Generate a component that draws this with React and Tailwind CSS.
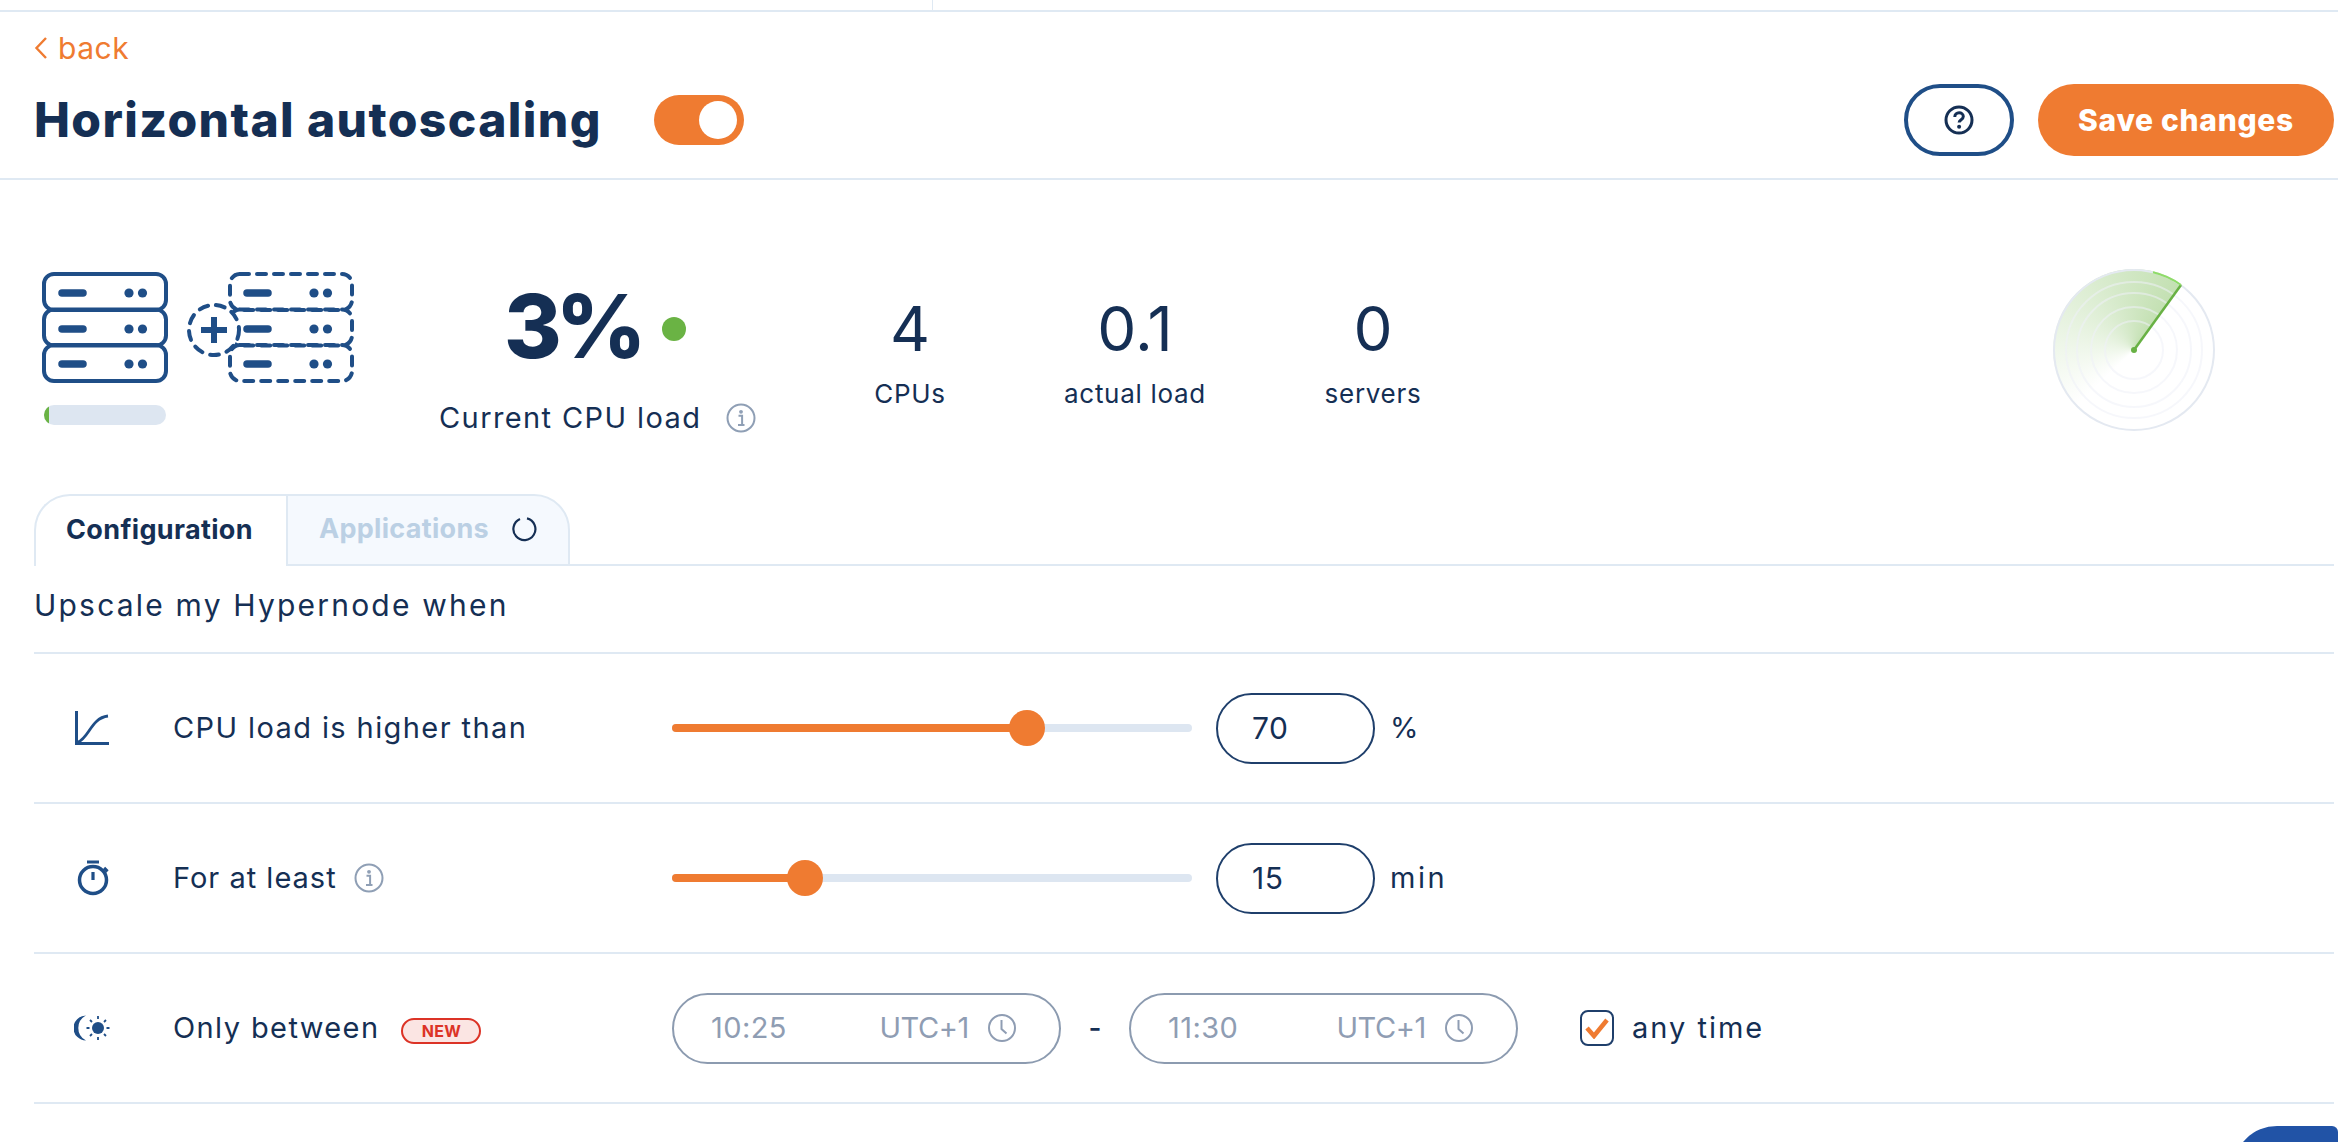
import React from 'react';

const line = 'border-[#dfe9f3]';

const InfoIcon = () => (
    <svg width="30" height="30" viewBox="0 0 30 30" fill="none" className="shrink-0">
        <circle cx="15" cy="15" r="13.5" stroke="#8f9fb5" strokeWidth="2" />
        <circle cx="15" cy="8.8" r="1.9" fill="#8f9fb5" />
        <path d="M12.5 12.8h3.6v9M12 22h6.5" stroke="#8f9fb5" strokeWidth="2" />
    </svg>
);

const ClockIcon = () => (
    <svg width="30" height="30" viewBox="0 0 30 30" fill="none" className="shrink-0">
        <circle cx="15" cy="15" r="13" stroke="#8f9db3" strokeWidth="2" />
        <path d="M14.5 7v9l5 4.5" stroke="#8f9db3" strokeWidth="2" />
    </svg>
);

const ServerRows = ({ x, dashed, barX, dotX }) => (
    <g>
        {[2, 37.5, 73].map((y, i) => (
            <rect key={i} x={x} y={y} width="122" height="36" rx="10" stroke="#1f4e87" strokeWidth="4" strokeDasharray={dashed ? '9 8' : undefined} strokeLinecap="round" />
        ))}
        {[21, 57, 92].map((y, i) => (
            <g key={i}>
                <path d={`M${barX} ${y}h21`} stroke="#1f4e87" strokeWidth="7.5" strokeLinecap="round" />
                <circle cx={dotX} cy={y} r="4.6" fill="#1f4e87" />
                <circle cx={dotX + 13.5} cy={y} r="4.6" fill="#1f4e87" />
            </g>
        ))}
    </g>
);

const ServersIcon = () => (
    <svg width="312" height="111" viewBox="0 0 312 111" fill="none" className="block">
        <ServerRows x={2} barX={20} dotX={87} />
        <ServerRows x={188} dashed barX={205} dotX={272} />
        <circle cx="172" cy="58" r="25" fill="white" stroke="#1f4e87" strokeWidth="4" strokeDasharray="9 8" strokeLinecap="round" />
        <path d="M159 58h26M172 45v26" stroke="#1f4e87" strokeWidth="6" />
    </svg>
);

const Radar = () => (
    <div className="relative size-[162px] rounded-full bg-[conic-gradient(from_216deg,#ffffff_0deg,#ffffff_10deg,#c3e0b2_180deg,#ffffff_180deg)]">
        <svg width="162" height="162" viewBox="0 0 162 162" fill="none" className="absolute inset-0">
            {[29, 43, 57, 68].map(r => (
                <circle key={r} cx="81" cy="81" r={r} stroke="#eef1f7" strokeOpacity="0.55" strokeWidth="2" />
            ))}
            <circle cx="81" cy="81" r="80" stroke="#e4e9f1" strokeWidth="2" />
            <path d="M81 81L128 16" stroke="#68b144" strokeWidth="2.5" />
            <path d="M128 16A80 80 0 0 0 100 3.3" stroke="#8fdc68" strokeWidth="2" />
            <circle cx="81" cy="81" r="3" fill="#68b144" />
        </svg>
    </div>
);

const Stat = ({ value, label, className }) => (
    <div className={`flex flex-col items-center pt-[21px] ${className}`}>
        <span className="text-[62px] leading-[72px]">{value}</span>
        <span className="mt-[13px] text-[26px] leading-[32px] tracking-[0.7px]">{label}</span>
    </div>
);

const Slider = ({ fill }) => (
    <div className="w-[520px] h-2 rounded-full bg-[#dde6f1] flex items-center">
        <div className={`h-2 rounded-l-full bg-[#ef7b31] ${fill}`} />
        <div className="size-9 -ml-[18px] shrink-0 rounded-full bg-[#ef7b31]" />
    </div>
);

const NumberBox = ({ value, unit }) => (
    <div className="ml-[24px] flex items-center">
        <div className="w-[159px] h-[71px] rounded-[36px] border-2 border-[#1f3f6b] pl-[34px] flex items-center text-[30px] tracking-[0.5px]">{value}</div>
        <span className="ml-[15px] text-[29px] tracking-[2.5px]">{unit}</span>
    </div>
);

const TimeBox = ({ time }) => (
    <div className="w-[389px] h-[71px] rounded-[36px] border-2 border-[#8c9bb0] flex items-center pl-[37px] pr-[42px] text-[29px] text-[#8f9db3]">
        <span className="tracking-[0.4px]">{time}</span>
        <span className="ml-auto mr-[18px] tracking-[-0.4px]">UTC+1</span>
        <ClockIcon />
    </div>
);

const Row = ({ icon, label, children }) => (
    <div className={`h-[150px] border-b-2 ${line} flex items-center`}>
        <div className="w-[139px] pl-[41px] flex items-center">{icon}</div>
        <div className="w-[499px] flex items-center text-[29px] tracking-[1.4px]">{label}</div>
        {children}
    </div>
);

const App = () => {
    return (
        <div className="relative w-[2338px] h-[1142px] overflow-hidden bg-white text-[#152f54] font-['Inter','Liberation_Sans',sans-serif]">
            <div className={`h-[12px] border-b-2 ${line} flex`}>
                <div className={`w-[933px] border-r ${line}`} />
            </div>

            <div className={`h-[168px] border-b-2 ${line} pl-[34px] pr-[4px] flex flex-col`}>
                <a className="mt-[18px] flex items-center text-[#ef7b31] text-[30px] leading-[36px] tracking-[0.5px]">
                    <svg width="14" height="24" viewBox="0 0 14 24" fill="none" className="mr-[10px]">
                        <path d="M12 2L2.5 12L12 22" stroke="#ef7b31" strokeWidth="2.4" />
                    </svg>
                    back
                </a>
                <div className="mt-[18px] flex items-center">
                    <h1 className="text-[48px] leading-[72px] font-extrabold tracking-[1.4px]">Horizontal autoscaling</h1>
                    <div className="ml-[52px] w-[90px] h-[50px] rounded-full bg-[#ef7b31] flex items-center justify-end pr-[7px]">
                        <div className="size-[38px] rounded-full bg-white" />
                    </div>
                    <button className="ml-auto w-[110px] h-[72px] rounded-full border-4 border-[#1f4e87] flex items-center justify-center">
                        <svg width="30" height="30" viewBox="0 0 30 30" fill="none">
                            <circle cx="15" cy="15" r="13" stroke="#152f54" strokeWidth="3" />
                            <path d="M10.8 12c0-2.6 2-4.2 4.3-4.2s4.2 1.5 4.2 3.8c0 3.2-4.2 3-4.2 6" stroke="#152f54" strokeWidth="3" />
                            <circle cx="15.1" cy="21.8" r="2" fill="#152f54" />
                        </svg>
                    </button>
                    <button className="ml-[24px] w-[296px] h-[72px] rounded-full bg-[#ef7b31] text-white text-[30px] font-extrabold tracking-[0.7px]">Save changes</button>
                </div>
            </div>

            <div className="h-[314px] pl-[42px] pr-[123px] pt-[92px] flex items-start">
                <div className="w-[312px]">
                    <ServersIcon />
                    <div className="mt-[22px] ml-[2px] w-[122px] h-5 rounded-full bg-[#dde6f1] overflow-hidden">
                        <div className="w-[5px] h-5 bg-[#6ab344]" />
                    </div>
                </div>

                <div className="ml-[85px] w-[316px] flex flex-col">
                    <div className="ml-[65px] flex items-center h-[108px]">
                        <span className="text-[88px] leading-[108px] font-extrabold tracking-[-6px]">3%</span>
                        <span className="ml-[22px] mt-[5px] size-6 rounded-full bg-[#6ab344]" />
                    </div>
                    <div className="mt-[20px] flex items-center whitespace-nowrap text-[29px] leading-[36px] tracking-[1.4px]">
                        Current CPU load
                        <span className="ml-[25px]"><InfoIcon /></span>
                    </div>
                </div>

                <Stat value="4" label="CPUs" className="ml-[55px] w-[200px]" />
                <Stat value="0.1" label="actual load" className="w-[250px]" />
                <Stat value="0" label="servers" className="w-[226px]" />

                <div className="ml-auto -mt-[3px]"><Radar /></div>
            </div>

            <div className="pl-[34px] pr-[4px]">
                <div className="flex items-end h-[72px]">
                    <div className={`w-[252px] h-[72px] rounded-tl-[36px] border-l-2 border-t-2 ${line} flex items-center pl-[30px] pb-[2px] text-[27px] font-bold tracking-[0.35px]`}>Configuration</div>
                    <div className={`w-[284px] h-[72px] rounded-tr-[36px] border-2 ${line} bg-[#f5f9fe] flex items-center pl-[31px] pb-[2px] text-[27px] font-bold tracking-[0.3px] text-[#bbd0e4]`}>
                        Applications
                        <svg width="26" height="26" viewBox="0 0 26 26" fill="none" className="ml-[22px]">
                            <path d="M9 3A11 11 0 1 0 16 2.4" stroke="#152f54" strokeWidth="2.2" />
                        </svg>
                    </div>
                    <div className={`flex-1 border-b-2 ${line}`} />
                </div>
                <div className={`h-[88px] border-b-2 ${line} flex pt-[19px] text-[30px] leading-[40px] tracking-[2.2px]`}>Upscale my Hypernode when</div>

                <Row
                    label="CPU load is higher than"
                    icon={
                        <svg width="34" height="34" viewBox="0 0 34 34" fill="none">
                            <path d="M1.5 0v32.5H34" stroke="#1f4e87" strokeWidth="3" />
                            <path d="M3 31C14 27 16 7 33 5" stroke="#1f4e87" strokeWidth="2.8" />
                        </svg>
                    }
                >
                    <Slider fill="w-[355px]" />
                    <NumberBox value="70" unit="%" />
                </Row>

                <Row
                    label={<span className="flex items-center tracking-[1px]">For at least<span className="ml-[17px]"><InfoIcon /></span></span>}
                    icon={
                        <svg width="34" height="36" viewBox="0 0 34 36" fill="none" className="ml-[2px]">
                            <circle cx="16" cy="20" r="13.5" stroke="#1f4e87" strokeWidth="3.5" />
                            <path d="M10 2h12M16 12v8M27 8l3.5 3.5" stroke="#1f4e87" strokeWidth="3.2" />
                        </svg>
                    }
                >
                    <Slider fill="w-[133px]" />
                    <NumberBox value="15" unit="min" />
                </Row>

                <Row
                    label={
                        <>
                            Only between
                            <span className="ml-[22px] mt-[6px] w-[80px] h-[26px] rounded-full border-2 border-[#dc3326] bg-[#fbe5e3] flex items-center justify-center text-[16px] font-bold text-[#dc3326] tracking-[0.3px]">NEW</span>
                        </>
                    }
                    icon={
                        <svg width="36" height="28" viewBox="0 0 36 28" fill="none" className="-ml-[1px]">
                            <path d="M12 1.5A12.5 12.5 0 1 0 12 26.5A14 14 0 0 1 12 1.5Z" fill="#1f4e87" />
                            <circle cx="24" cy="14" r="6" fill="#1f4e87" />
                            <path d="M24 2v3M24 23v3M12.5 14h3M32.5 14h3M16 6l2 2M30 20l2 2M16 22l2-2M30 8l2-2" stroke="#1f4e87" strokeWidth="1.8" />
                        </svg>
                    }
                >
                    <TimeBox time="10:25" />
                    <span className="w-[68px] text-center text-[28px] font-medium">-</span>
                    <TimeBox time="11:30" />
                    <div className="ml-[62px] flex items-center">
                        <div className="w-[34px] h-[36px] rounded-[8px] border-2 border-[#1f3f6b] flex items-center justify-center">
                            <svg width="24" height="22" viewBox="0 0 24 22" fill="none">
                                <path d="M2 11l7 8L22 3" stroke="#ef7b31" strokeWidth="4.5" />
                            </svg>
                        </div>
                        <span className="ml-[18px] text-[29px] tracking-[2px]">any time</span>
                    </div>
                </Row>
            </div>

            <div className="absolute left-[2233px] top-[1126px] w-[105px] h-[80px] rounded-tl-[44px] rounded-tr-[6px] bg-[#2153a6]" />
        </div>
    );
};

export default App;
